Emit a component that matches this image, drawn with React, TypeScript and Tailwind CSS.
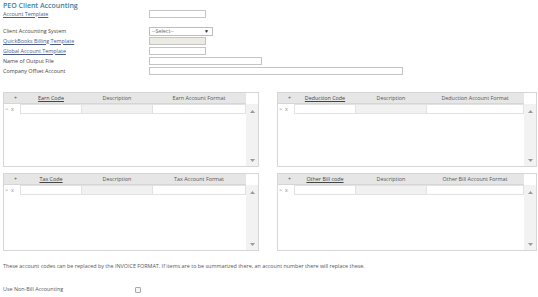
import * as React from "react"

interface GridProps {
  code: string;
  format: string;
  height: string;
}

function Arrow({ down }: { down?: boolean }) {
  return (
    <svg width="5" height="3" viewBox="0 0 5 3" className="block">
      {down ? <path d="M0 0h5L2.5 3z" fill="#9a9a9a" /> : <path d="M0 3h5L2.5 0z" fill="#9a9a9a" />}
    </svg>
  )
}

function AccountGrid({ code, format, height }: GridProps) {
  return (
    <div className={`${height} border border-[#d6d6d6] flex flex-col bg-white`}>
      <div className="flex h-[11px] text-[#555]">
        <div className="flex flex-1 bg-[#e6e6e6] border-b border-[#d6d6d6]">
          <div className="w-[16px] flex items-center justify-end pr-[3px]">+</div>
          <div className="w-[62px] flex items-center justify-center">
            <span className="underline text-[#444]">{code}</span>
          </div>
          <div className="w-[70px] flex items-center justify-center">Description</div>
          <div className="flex-1 flex items-center justify-center">{format}</div>
        </div>
        <div className="w-[12px]" />
      </div>
      <div className="flex flex-1">
        <div className="flex-1 flex flex-col">
          <div className="flex h-[10px]">
            <div className="w-[16px] flex items-center pl-[1px] gap-[3px] text-[#888]">
              <span>&gt;</span>
              <span>x</span>
            </div>
            <div className="w-[62px] border border-[#e2e2e2] bg-white" />
            <div className="w-[70px] border-y border-[#e2e2e2] bg-[#f1f1f1]" />
            <div className="flex-1 border border-[#e2e2e2] bg-white" />
          </div>
        </div>
        <div className="w-[12px] bg-[#f2f2f2] flex flex-col items-center justify-between pt-[6px] pb-[4px]">
          <Arrow />
          <Arrow down />
        </div>
      </div>
    </div>
  )
}

function FormRow({ label, link, children }: { label: string; link?: boolean; children: React.ReactNode }) {
  return (
    <div className="flex items-center h-[10px]">
      <div className="w-[146px]">
        {link ? <span className="underline text-[#4b5b86]">{label}</span> : <span className="text-[#444]">{label}</span>}
      </div>
      {children}
    </div>
  )
}

export default function App() {
  return (
    <div className="w-[538px] h-[297px] bg-white overflow-hidden pl-[3px] pr-[1px] text-[5.4px] leading-[7px] text-[#444] font-['Open_Sans',sans-serif]">
      <div className="text-[7px] leading-[9px] font-semibold text-[#3a7fa2] pt-[1px] h-[9px]">PEO Client Accounting</div>
      <FormRow label="Account Template" link>
        <div className="w-[57px] h-[8px] border border-[#c4c4c4] bg-white" />
      </FormRow>
      <div className="h-[7px]" />
      <FormRow label="Client Accounting System">
        <div className="w-[64px] h-[9px] border border-[#bdbdbd] bg-white flex items-center justify-between pl-[2px] pr-[3px] text-[#666]">
          <span>--Select--</span>
          <span className="text-[5px] text-[#222]">▼</span>
        </div>
      </FormRow>
      <FormRow label="QuickBooks Billing Template" link>
        <div className="w-[57px] h-[8px] border border-[#c4c4c4] bg-[#ebebe4]" />
      </FormRow>
      <FormRow label="Global Account Template" link>
        <div className="w-[57px] h-[8px] border border-[#c4c4c4] bg-white" />
      </FormRow>
      <FormRow label="Name of Output File">
        <div className="w-[113px] h-[8px] border border-[#c4c4c4] bg-white" />
      </FormRow>
      <FormRow label="Company Offset Account">
        <div className="w-[254px] h-[8px] border border-[#c4c4c4] bg-white" />
      </FormRow>

      <div className="grid grid-cols-[256px_260px] gap-x-[18px] gap-y-[6px] mt-[16px]">
        <AccountGrid code="Earn Code" format="Earn Account Format" height="h-[75px]" />
        <AccountGrid code="Deduction Code" format="Deduction Account Format" height="h-[75px]" />
        <AccountGrid code="Tax Code" format="Tax Account Format" height="h-[78px]" />
        <AccountGrid code="Other Bill code" format="Other Bill Account Format" height="h-[78px]" />
      </div>

      <p className="mt-[12px] text-[#555]">
        These account codes can be replaced by the INVOICE FORMAT. If items are to be summarized there, an account number there will replace these.
      </p>

      <div className="flex items-center mt-[16px] text-[#555]">
        <div className="w-[132px]">Use Non-Bill Accounting</div>
        <div className="w-[6px] h-[6px] border border-[#aaa] rounded-[1px] bg-[#f4f4f4]" />
      </div>
    </div>
  )
}
